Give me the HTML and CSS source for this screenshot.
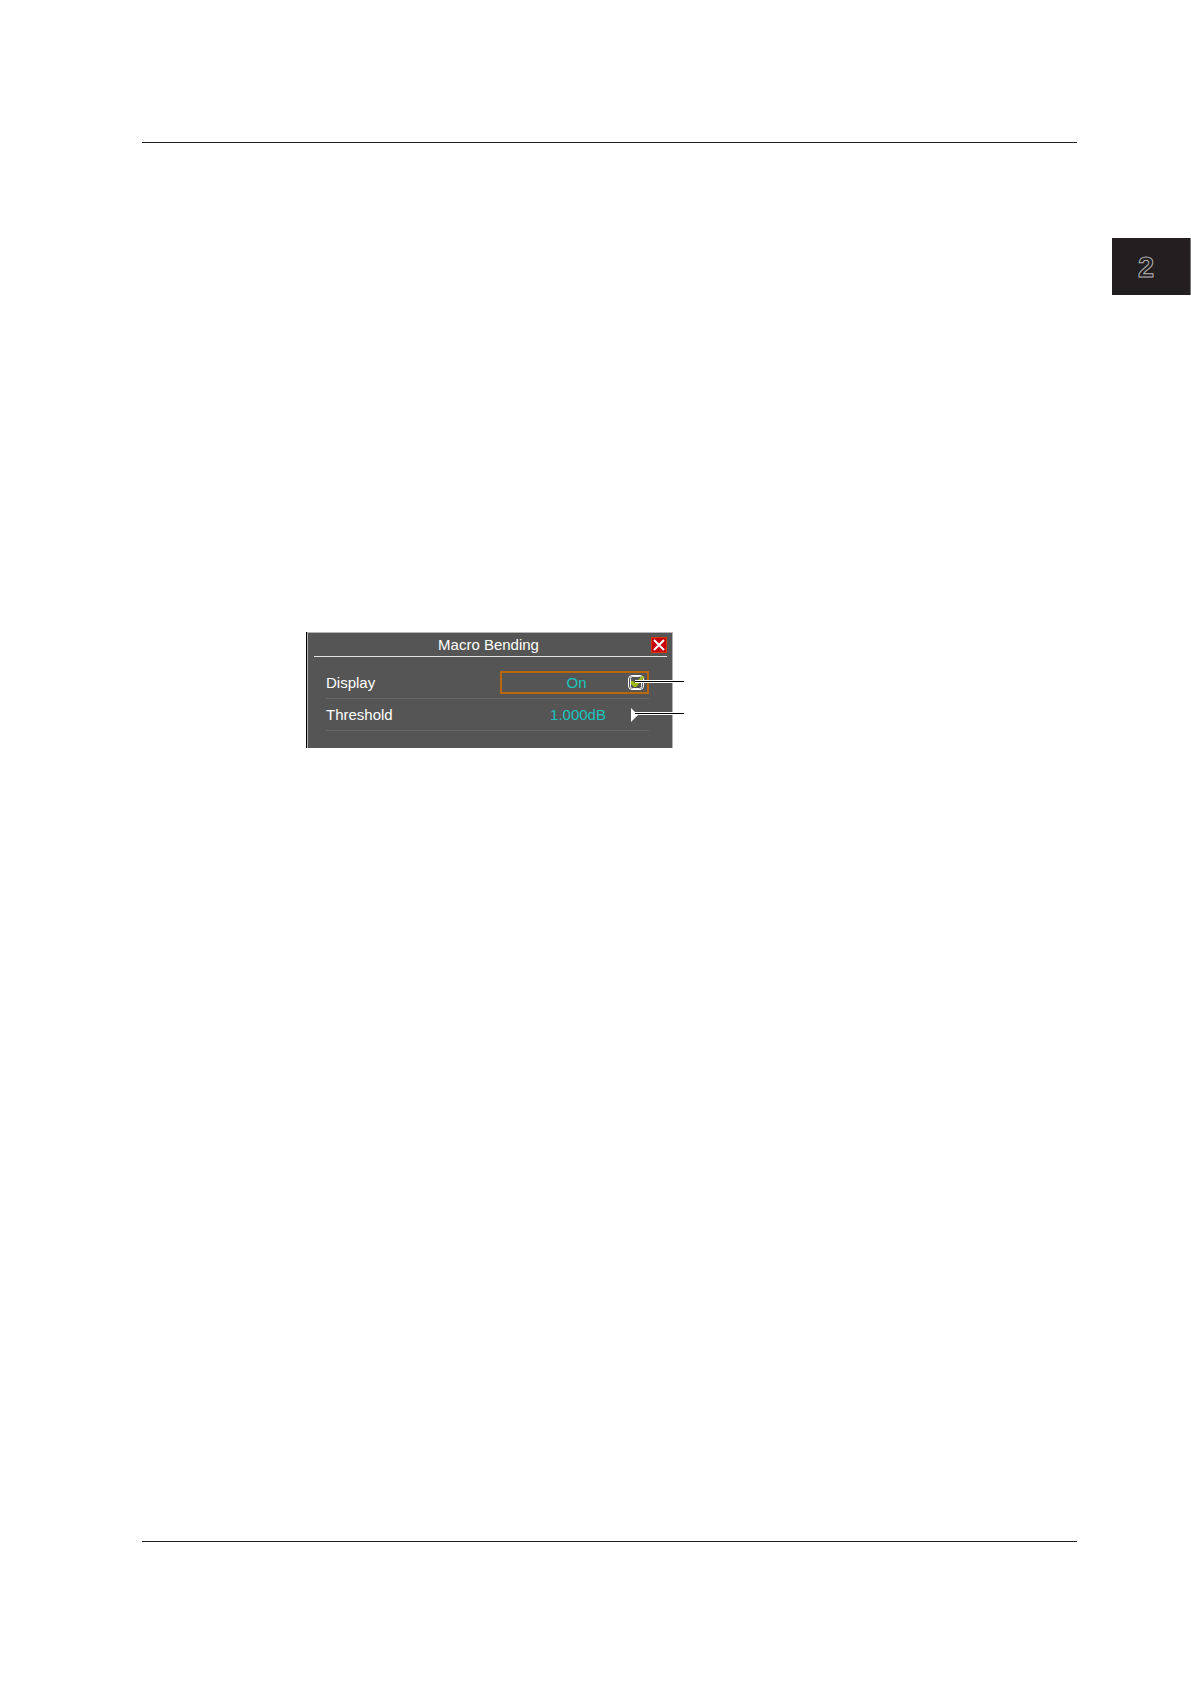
FILE: index.html
```html
<!DOCTYPE html>
<html lang="en">
<head>
  <meta charset="UTF-8">
  <meta name="viewport" content="width=device-width, initial-scale=1.0">
  <title>Macro Bending</title>
  <link rel="stylesheet" href="styles.css">
</head>
<body>

  <header class="page-header"></header>

  <nav class="chapter">
    <a href="#" class="chapter-tab">2</a>
  </nav>

  <main>
    <section class="panel">
      <div class="panel-title">
        <h1>Macro Bending</h1>
        <button type="button" class="close" aria-label="Close">
          <svg width="16" height="16" viewBox="0 0 16 16">
            <path d="M3 3 L13 13 M13 3 L3 13" stroke="#fff" stroke-width="2"/>
          </svg>
        </button>
      </div>

      <div class="row">
        <label class="name" for="display">Display</label>
        <div class="field selected">
          <output class="value" for="display">On</output>
          <span class="check">
            <input type="checkbox" id="display" checked>
            <svg width="18" height="16" viewBox="0 0 18 16">
              <rect x="2.5" y="1.5" width="11" height="12" rx="2" fill="none" stroke="#f0f0f0"/>
              <path d="M3 6 L5 6 L7 8 L13 2 L16 1 L15 4 L8 12 L6 12 L3 9 Z" fill="#9dba12"/>
            </svg>
          </span>
          <span class="leader"></span>
        </div>
      </div>

      <div class="row">
        <span class="name">Threshold</span>
        <div class="field">
          <span class="value">1.000dB</span>
          <button type="button" class="arrow" aria-label="Set threshold">
            <svg width="8" height="14" viewBox="0 0 8 14">
              <path d="M0 0 L7 7 L0 14 Z" fill="#fff"/>
            </svg>
          </button>
          <span class="leader"></span>
        </div>
      </div>
    </section>
  </main>

  <footer class="page-footer"></footer>

</body>
</html>
```

FILE: styles.css
```css
* {
  box-sizing: border-box;
}
body {
  margin: 0;
  min-height: 100vh;
  display: flex;
  flex-direction: column;
  background-color: #fff;
  font-family: "Liberation Sans", Arial, sans-serif;
}
.page-header {
  margin: 142px 114px 0 142px;
  border-top: 1px solid #231f20;
}
.page-footer {
  margin: auto 114px 142px 142px;
  border-top: 1px solid #231f20;
}

/* chapter tab on the page edge */
.chapter {
  display: flex;
  justify-content: flex-end;
  margin-top: 95px;
}
.chapter-tab {
  width: 79px;
  height: 57px;
  padding-right: 10px;
  border-right: 1px solid #777;
  background-color: #231f20;
  color: #231f20;
  font: bold 29px/58px "Liberation Sans", Arial, sans-serif;
  text-align: center;
  text-decoration: none;
  -webkit-text-stroke: 1px #b4b4b4;
}

main {
  padding: 337px 142px 0 307px;
}
.panel {
  max-width: 366px;
  padding: 0 5px 17px 6px;
  border: 1px solid #b4b4b4;
  border-bottom: none;
  box-shadow: -1px 0 #000;
  background-color: #555;
  color: #fff;
  font-size: 15px;
}
.panel-title {
  display: flex;
  align-items: center;
  height: 24px;
  border-bottom: 1px solid #e4e4e4;
}
.panel-title h1 {
  flex: 1;
  margin: 0;
  padding-left: 12px;
  font-size: 15px;
  font-weight: normal;
  line-height: 24px;
  text-align: center;
}
.close,
.arrow {
  display: block;
  padding: 0;
  border: none;
  background: none;
  cursor: pointer;
}
.close svg,
.arrow svg {
  display: block;
}
.close {
  background-color: #c8000a;
  outline: 1px solid #d8370c;
  outline-offset: -1px;
}

.row {
  display: flex;
  align-items: center;
  height: 32px;
  margin: 0 18px 0 12px;
  border-bottom: 1px solid #666;
}
.panel-title + .row {
  margin-top: 10px;
}
.name {
  flex: 1;
}
.field {
  position: relative;
  display: flex;
  align-items: center;
  width: 149px;
  height: 23px;
  border: 2px solid transparent;
}
.field.selected {
  border-color: #b8670f;
}
.value {
  flex: 1;
  padding-left: 23px;
  color: #19c5bf;
  text-align: center;
}
.check {
  position: relative;
  width: 17px;
  height: 16px;
  margin-right: 2px;
}
.check input {
  appearance: none;
  display: block;
  width: 16px;
  height: 15px;
  margin: 0;
  border: 1px solid #fff;
  border-radius: 4px;
}
.check svg {
  position: absolute;
  left: 0;
  top: 0;
  pointer-events: none;
}
.arrow {
  width: 8px;
  margin-right: 8px;
}

/* callout line that runs out of the panel */
.leader {
  position: absolute;
  left: 133px;
  top: 8px;
  width: 49px;
  height: 1px;
  background-color: #000;
  box-shadow: 0 -1px #fff, 0 1px #fff;
}
```
